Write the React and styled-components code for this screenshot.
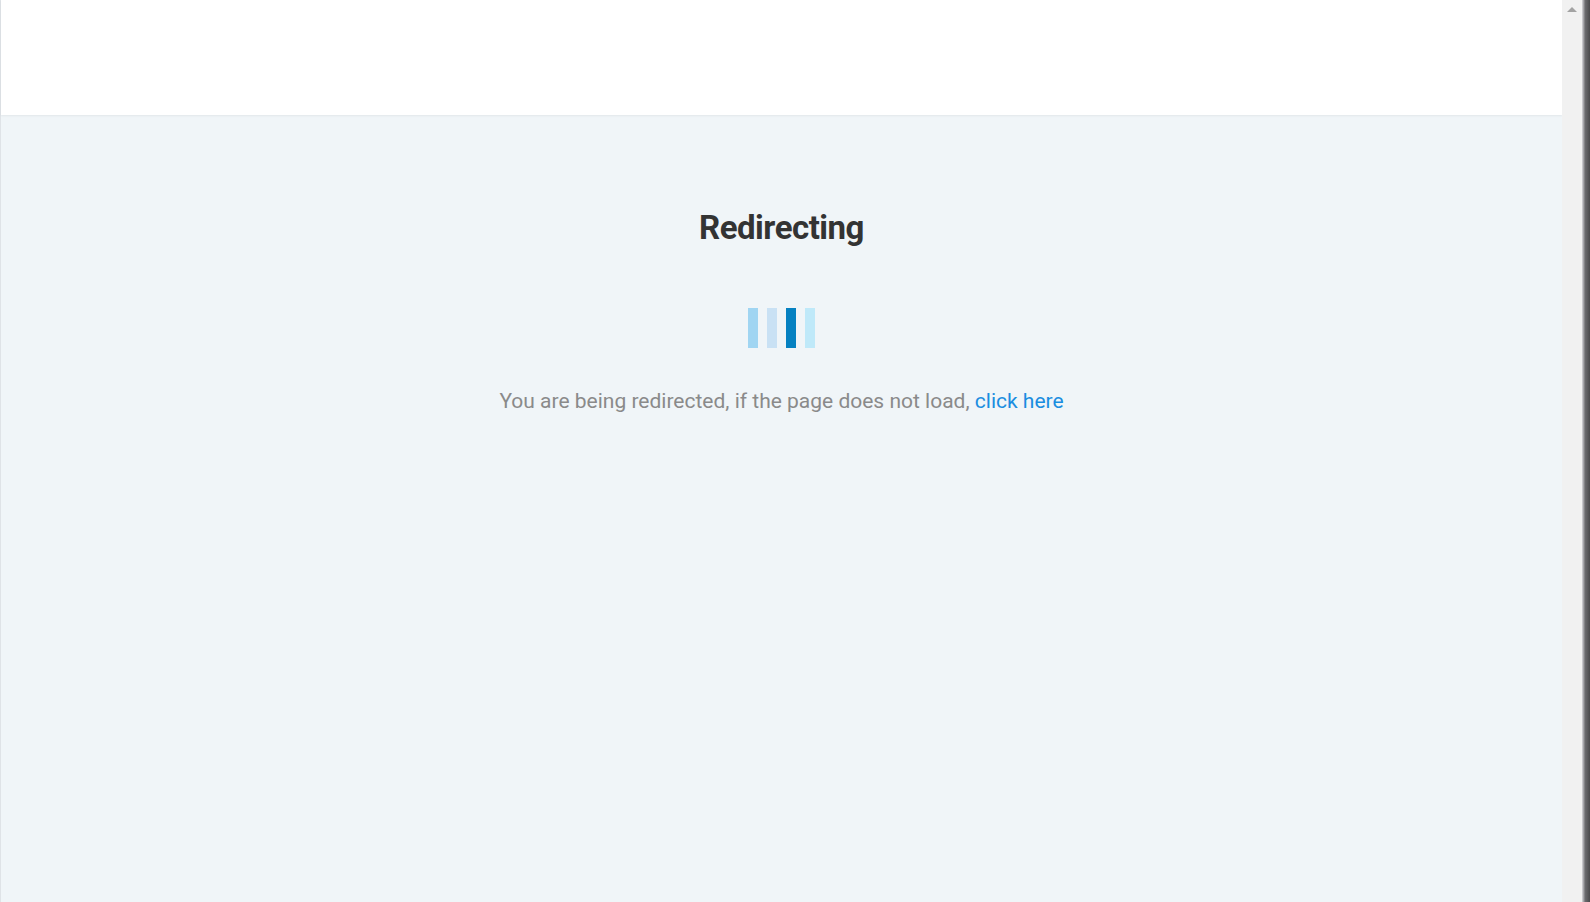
import React from "react";
import styled, { createGlobalStyle } from "styled-components";

const GlobalStyle = createGlobalStyle`
  html, body {
    margin: 0;
    padding: 0;
    height: 100%;
    overflow: hidden;
  }
  body {
    font-family: Roboto, "Liberation Sans", Arial, sans-serif;
  }
  #root {
    height: 100%;
  }
`;

const Frame = styled.div`
  display: flex;
  height: 902px;
  width: 1590px;
`;

const Page = styled.div`
  flex: 1;
  display: flex;
  flex-direction: column;
  background: #f0f5f8;
  border-left: 1px solid #dfe3e7;
`;

const TopBar = styled.header`
  height: 115px;
  flex-shrink: 0;
  background: #ffffff;
  box-shadow: 0 1px 2px rgba(0, 0, 0, 0.06);
`;

const Content = styled.main`
  display: flex;
  flex-direction: column;
  align-items: center;
  padding-top: 93px;
`;

const Title = styled.h1`
  margin: 0;
  font-size: 33px;
  font-weight: 700;
  color: #333333;
  letter-spacing: -0.5px;
`;

const Loader = styled.div`
  display: flex;
  gap: 9px;
  margin-top: 61px;
`;

const Bar = styled.span`
  display: block;
  width: 10px;
  height: 40px;
  background: ${(p) => p.$color};
`;

const Message = styled.p`
  margin: 41px 0 0;
  font-size: 21px;
  color: #8a8a8a;
`;

const Link = styled.a`
  color: #1a8de0;
  text-decoration: none;
`;

const Scrollbar = styled.div`
  width: 20px;
  flex-shrink: 0;
  background: #f1f1f1;
  display: flex;
  justify-content: center;
  padding-top: 7px;
  box-sizing: border-box;
`;

const Arrow = styled.span`
  width: 0;
  height: 0;
  border-left: 5px solid transparent;
  border-right: 5px solid transparent;
  border-bottom: 5px solid #a3a3a3;
`;

const Edge = styled.div`
  width: 8px;
  flex-shrink: 0;
  background: linear-gradient(to right, #d8d8dc, #6b6b6e 40%, #4a4a4c);
`;

const bars = ["#a0d5f2", "#c9e1f4", "#0581c1", "#bfe9f9"];

export default function App() {
  return (
    <>
      <GlobalStyle />
      <Frame>
        <Page>
          <TopBar />
          <Content>
            <Title>Redirecting</Title>
            <Loader>
              {bars.map((c, i) => (
                <Bar key={i} $color={c} />
              ))}
            </Loader>
            <Message>
              You are being redirected, if the page does not load,{" "}
              <Link href="#">click here</Link>
            </Message>
          </Content>
        </Page>
        <Scrollbar>
          <Arrow />
        </Scrollbar>
        <Edge />
      </Frame>
    </>
  );
}
